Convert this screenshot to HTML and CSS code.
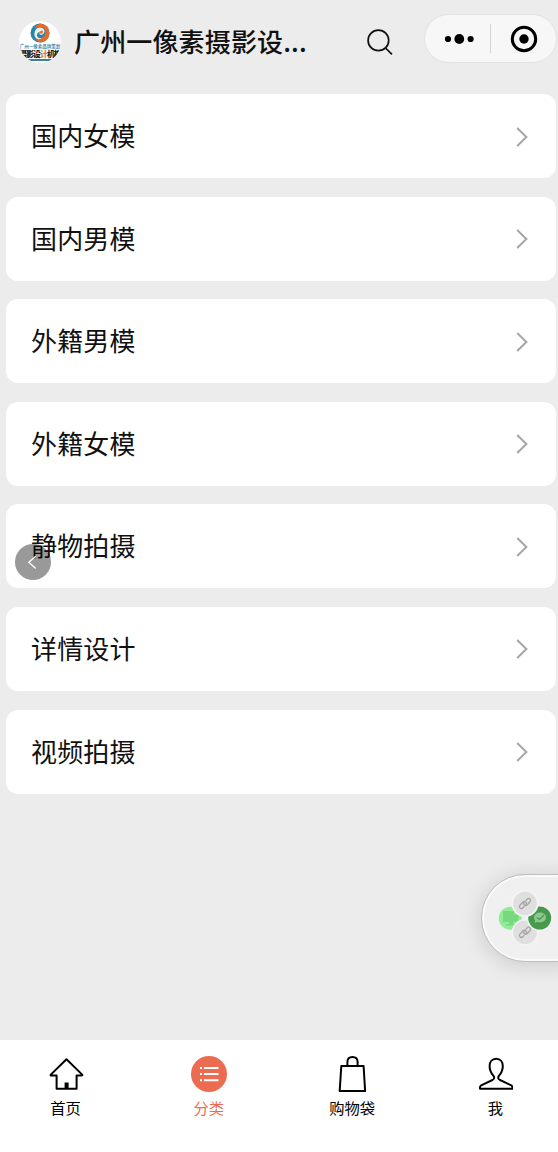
FILE: index.html
```html
<!DOCTYPE html>
<html lang="zh-CN">
<head>
<meta charset="utf-8">
<title>分类</title>
<link rel="stylesheet" href="styles.css">
</head>
<body>
<div class="app">
  <header class="header">
    <div class="logo">
      <svg class="logo-mark" viewBox="0 0 20 20"><circle cx="10" cy="10" r="9.500" fill="#2486ae"/><path d="M10 .5A9.500 9.500 0 0 1 10 19.500Q6 18.500 6 15Q11 17 14.500 12.500Q16.500 8 14 5.500Q12 3.500 9 4Q6 4.500 4.500 7Q5 2 10 .5Z" fill="#e36b2c"/><path d="M4.500 10Q5 5 10 4.500Q14.500 5 14.500 8.500Q14 11.500 11 12Q8.500 11.500 10 8.500Q6.500 9.500 7 13Q8 15.500 12 15.500Q6.500 17.500 4.800 13.500Q4.200 12 4.500 10Z" fill="#f5eee7"/><path d="M10.200 8.200Q13 6.500 13 9Q12.500 11 10.800 11Q9.500 10 10.200 8.200Z" fill="#e36b2c"/></svg>
      <span class="logo-small">广州一像素品牌策划</span>
      <span class="logo-big">摄影设<i>计</i>机构</span>
      <span class="logo-line"></span>
    </div>
    <h1 class="title">广州一像素摄影设...</h1>
    <svg class="search" viewBox="0 0 28 28"><circle cx="12.400" cy="12.400" r="10.300"/><path d="M19.500 20L26 26.400"/></svg>
    <div class="capsule">
      <svg class="dots" viewBox="0 0 30 12"><circle cx="4" cy="6" r="3.100"/><circle cx="15.300" cy="6" r="4.900"/><circle cx="26.600" cy="6" r="3.100"/></svg>
      <span class="divider"></span>
      <svg class="target" viewBox="0 0 28 28"><circle cx="14" cy="14" r="11.700" fill="none" stroke="#000" stroke-width="3"/><circle cx="14" cy="14" r="4.700"/></svg>
    </div>
  </header>

  <main class="list">
    <div class="card"><span>国内女模</span><svg class="arrow" viewBox="0 0 12 20"><path d="M1.200 1L10.400 10L1.200 19"/></svg></div>
    <div class="card"><span>国内男模</span><svg class="arrow" viewBox="0 0 12 20"><path d="M1.200 1L10.400 10L1.200 19"/></svg></div>
    <div class="card"><span>外籍男模</span><svg class="arrow" viewBox="0 0 12 20"><path d="M1.200 1L10.400 10L1.200 19"/></svg></div>
    <div class="card"><span>外籍女模</span><svg class="arrow" viewBox="0 0 12 20"><path d="M1.200 1L10.400 10L1.200 19"/></svg></div>
    <div class="card"><span>静物拍摄</span><svg class="arrow" viewBox="0 0 12 20"><path d="M1.200 1L10.400 10L1.200 19"/></svg></div>
    <div class="card"><span>详情设计</span><svg class="arrow" viewBox="0 0 12 20"><path d="M1.200 1L10.400 10L1.200 19"/></svg></div>
    <div class="card"><span>视频拍摄</span><svg class="arrow" viewBox="0 0 12 20"><path d="M1.200 1L10.400 10L1.200 19"/></svg></div>
  </main>

  <nav class="tabs">
    <div class="tab">
      <svg class="tab-icon" viewBox="0 0 36 36"><path d="M18.500 3.200L2.800 18.600Q2.200 19.500 3.500 19.500H8.600V32.800H28.600V19.500H33.600Q34.800 19.500 34.200 18.600Z"/><path d="M18.600 26.500V32" stroke-width="4"/></svg>
      <span>首页</span>
    </div>
    <div class="tab active">
      <svg class="tab-icon" viewBox="0 0 36 36"><circle cx="18" cy="18" r="18" fill="#ec6c52" stroke="none"/><path d="M13 12H27.500M13 18H27.500M13 24.200H27.500M9 12H11M9 18H11M9 24.200H11" stroke="#fff" stroke-width="2"/></svg>
      <span>分类</span>
    </div>
    <div class="tab">
      <svg class="tab-icon" viewBox="0 0 36 36"><path d="M7.300 10H29.600L31.100 35H5.700ZM13.400 10V6Q13.400 1 18.500 1T23.600 6V10"/></svg>
      <span>购物袋</span>
    </div>
    <div class="tab">
      <svg class="tab-icon" viewBox="-1 0 36 36"><path d="M18.200 2.700C14 2.700 11.600 6 11.600 10C11.600 14 13 17 15.300 19.600C16.800 21.500 16.200 23 14.500 24L3.200 29.300Q1.500 30.500 2 32.800H34.400Q34.900 30.500 33.200 29.300L22 24C20.200 23 19.600 21.500 21.100 19.600C23.400 17 24.800 14 24.800 10C24.800 6 22.400 2.700 18.200 2.700Z"/></svg>
      <span>我</span>
    </div>
  </nav>

  <div class="back"><svg viewBox="0 0 36 36"><path d="M20.700 12.200L13.800 18.300L20.700 24.600"/></svg></div>
  <div class="floater">
    <svg viewBox="0 0 60 60">
      <circle cx="13.300" cy="31.200" r="11.500" fill="#91ec98"/>
      <path d="M6 24H21.500V35H16V37H19V38.500H9V37H12V35H6Z" fill="#76d97d"/>
      <path d="M16.500 28L19.500 25.500M17 25.500H19.500V28" stroke="#a9f3ad" fill="none" stroke-width=".8"/>
      <circle cx="28" cy="45.300" r="13.300" fill="#f4f4f4"/>
      <circle cx="28" cy="45.300" r="11.800" fill="#dfdfdf"/>
      <circle cx="42.700" cy="31" r="13" fill="#f4f4f4"/>
      <circle cx="42.700" cy="31" r="11.500" fill="#47994b"/>
      <circle cx="28" cy="16.500" r="13.500" fill="#f4f4f4"/>
      <circle cx="28" cy="16.500" r="11.800" fill="#dfdfdf"/>
      <ellipse cx="43" cy="30.500" rx="6" ry="4.900" fill="#8fc591"/><path d="M38 32V36L42 34Z" fill="#8fc591"/>
      <path d="M40 30.500L42.500 32.500L47 28" fill="none" stroke="#47994b" stroke-width="1.300"/>
      <g id="link" fill="none" stroke="#a4a4a4" stroke-width="1.300" stroke-linecap="round" stroke-linejoin="round"><path d="M27 19.500L25.800 21Q24.300 22.300 23 21T23 18.300L26 15Q27.300 13.800 28.700 15T29 17.500"/><path d="M29 13.500L30.200 12Q31.700 10.700 33 12T33 14.700L30 18Q28.700 19.200 27.300 18T27 15.500"/></g>
      <use href="#link" y="28.800"/>
    </svg>
  </div>
</div>
</body>
</html>
```
FILE: styles.css
```css
* { box-sizing: border-box; }
body { margin: 0; background: #ececec; font-family: "Noto Sans CJK SC", sans-serif; color: #111; }
svg { display: block; flex: none; }
.app { position: relative; width: 558px; height: 1152px; overflow: hidden; display: flex; flex-direction: column; }
.header { height: 94px; flex: none; display: flex; align-items: flex-start; padding: 14px 0 0 19px; }
.logo { width: 42px; height: 42px; margin-top: 7px; border-radius: 50%; background: #fff; overflow: hidden; display: flex; flex-direction: column; align-items: center; flex: none; white-space: nowrap; }
.logo-mark { width: 20px; height: 20px; margin-top: 2px; }
.logo-small { font-size: 4.500px; line-height: 5px; color: #2774a0; font-weight: 500; margin-top: 1px; }
.logo-big { font-size: 7.800px; line-height: 9px; font-weight: 900; letter-spacing: -.9px; color: #222; }
.logo-big i { font-style: normal; color: #e4793e; }
.logo-line { width: 28px; height: 2px; margin-top: 1px; background: #3c8097; }
.title { width: 240px; margin: 8px 0 0 13px; font-size: 26px; line-height: 38px; font-weight: 500; letter-spacing: .15px; white-space: nowrap; }
.search { width: 28px; height: 28px; margin: 14px 0 0 52px; fill: none; stroke: #111; stroke-width: 1.700; }
.capsule { width: 133px; height: 49px; margin-left: 30px; border: 1px solid #e2e2e2; border-radius: 25px; background: #f7f7f7; display: flex; align-items: center; flex: none; padding-left: 19px; }
.dots { width: 30px; height: 12px; }
.divider { width: 1px; height: 29px; margin-left: 16px; background: #d4d4d4; }
.target { width: 28px; height: 28px; margin-left: 19px; }
.list { flex: 1; display: flex; flex-direction: column; gap: 18.600px; padding: 0 2px 0 6px; }
.card { height: 84px; flex: none; border-radius: 12px; background: #fff; display: flex; align-items: center; justify-content: space-between; padding: 0 28px 0 25px; font-size: 26px; line-height: 38px; letter-spacing: .15px; }
.card span { padding-bottom: 2px; }
.arrow { width: 12px; height: 20px; margin-top: 1px; fill: none; stroke: #a6a6a6; stroke-width: 2; }
.tabs { height: 112px; flex: none; margin: 0 -9px 0 -6px; background: #fff; display: grid; grid-template-columns: repeat(4, 1fr); }
.tab { display: flex; flex-direction: column; align-items: center; padding-top: 16px; font-size: 15.300px; line-height: 22px; color: #000; }
.tab span { margin-top: 4px; }
.tab-icon { width: 36px; height: 36px; fill: none; stroke: #000; stroke-width: 2; stroke-linejoin: round; }
.active { color: #ec6c52; }
.back { position: absolute; left: 15px; top: 544px; width: 36px; height: 36px; border-radius: 50%; background: rgba(0,0,0,.4); }
.back svg { fill: none; stroke: #fff; stroke-width: 1.300; }
.floater { position: absolute; left: 481px; top: 874px; width: 90px; height: 88px; padding: 12px 0 0 15px; border: 1px solid #bdbdbd; border-radius: 44px 0 0 44px; background: #f0f0f0; box-shadow: inset 0 0 0 2px #fafafa, 0 3px 22px rgba(0,0,0,.14); }
.floater svg { width: 60px; height: 60px; }
```
